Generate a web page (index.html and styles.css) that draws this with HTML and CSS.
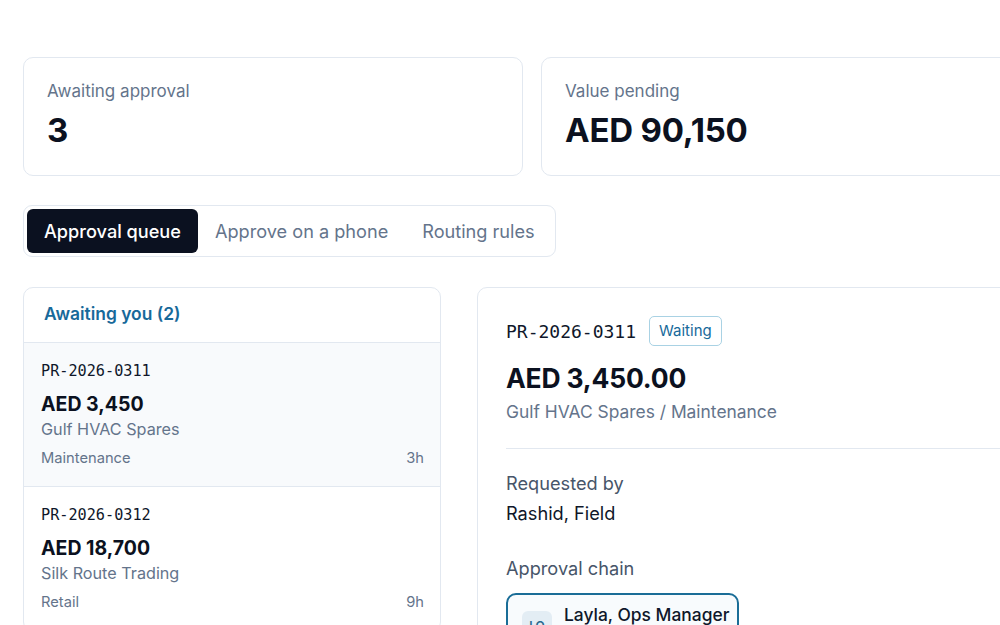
FILE: index.html
```html
<!DOCTYPE html>
<html lang="en">
<head>
<meta charset="utf-8">
<title>Approvals</title>
<link rel="stylesheet" href="styles.css">
</head>
<body>
<main class="page">
  <section class="stats">
    <div class="stat">
      <div class="stat-label">Awaiting approval</div>
      <div class="stat-value">3</div>
    </div>
    <div class="stat">
      <div class="stat-label">Value pending</div>
      <div class="stat-value">AED 90,150</div>
    </div>
  </section>

  <nav class="tabs">
    <div class="tab active">Approval queue</div>
    <div class="tab">Approve on a phone</div>
    <div class="tab">Routing rules</div>
  </nav>

  <section class="panes">
    <div class="queue">
      <div class="queue-head">Awaiting you (2)</div>
      <div class="item selected">
        <div class="item-id">PR-2026-0311</div>
        <div class="item-amount">AED 3,450</div>
        <div class="item-vendor">Gulf HVAC Spares</div>
        <div class="item-meta"><span>Maintenance</span><span>3h</span></div>
      </div>
      <div class="item">
        <div class="item-id">PR-2026-0312</div>
        <div class="item-amount">AED 18,700</div>
        <div class="item-vendor">Silk Route Trading</div>
        <div class="item-meta"><span>Retail</span><span>9h</span></div>
      </div>
    </div>

    <div class="detail">
      <div class="detail-top">
        <span class="detail-id">PR-2026-0311</span>
        <span class="badge">Waiting</span>
      </div>
      <div class="detail-amount">AED 3,450.00</div>
      <div class="detail-sub">Gulf HVAC Spares / Maintenance</div>
      <div class="divider"></div>
      <div class="field-label">Requested by</div>
      <div class="field-value">Rashid, Field</div>
      <div class="field-label chain-label">Approval chain</div>
      <div class="chain">
        <div class="chain-step">
          <span class="avatar">LO</span>
          <span class="step-name">Layla, Ops Manager</span>
        </div>
      </div>
    </div>
  </section>
</main>
</body>
</html>
```

FILE: styles.css
```css
* { box-sizing: border-box; }
html, body {
  margin: 0;
  padding: 0;
  background: #ffffff;
  overflow: hidden;
  width: 1000px;
  height: 625px;
}
body {
  font-family: Inter, "Noto Sans", sans-serif;
  color: #0f172a;
}
.page {
  padding: 57px 0 0 23px;
  width: 1500px;
}
.stats {
  display: flex;
  gap: 18px;
}
.stat {
  width: 500px;
  height: 119px;
  border: 1px solid #e2e8f0;
  border-radius: 10px;
  padding: 22px 23px 0;
}
.stat-label {
  font-size: 17px;
  line-height: 22px;
  color: #64748b;
}
.stat-value {
  margin-top: 10px;
  font-size: 33px;
  line-height: 36px;
  font-weight: 700;
  letter-spacing: -0.2px;
  color: #0b1120;
}
.tabs {
  display: inline-flex;
  margin-top: 29px;
  border: 1px solid #e2e8f0;
  border-radius: 9px;
  padding: 3px;
}
.tab {
  height: 44px;
  line-height: 44px;
  padding: 0 17px;
  font-size: 18.15px;
  color: #64748b;
  border-radius: 6px;
}
.tab.active {
  background: #0b1120;
  color: #ffffff;
  font-weight: 500;
}
.panes {
  display: flex;
  gap: 36px;
  margin-top: 30px;
  align-items: flex-start;
}
.queue {
  width: 418px;
  border: 1px solid #e2e8f0;
  border-radius: 10px;
  overflow: hidden;
  flex: none;
}
.queue-head {
  height: 55px;
  padding: 14px 20px 0;
  font-size: 17.4px;
  line-height: 24px;
  font-weight: 600;
  color: #17699a;
  border-bottom: 1px solid #e2e8f0;
}
.item {
  padding: 18px 16px 18px 17px;
  border-bottom: 1px solid #e2e8f0;
}
.item.selected { background: #f8fafc; }
.item-id {
  font-family: "DejaVu Sans Mono", "Liberation Mono", monospace;
  font-size: 15.2px;
  line-height: 20px;
  color: #0f172a;
}
.item-amount {
  margin-top: 10px;
  font-size: 19.5px;
  line-height: 26px;
  font-weight: 700;
  color: #0b1120;
}
.item-vendor {
  font-size: 16.2px;
  line-height: 24px;
  color: #64748b;
}
.item-meta {
  margin-top: 7px;
  display: flex;
  justify-content: space-between;
  font-size: 14.7px;
  line-height: 20px;
  color: #64748b;
}
.detail {
  width: 640px;
  flex: none;
  border: 1px solid #e2e8f0;
  border-radius: 10px;
  padding: 28px 28px 40px;
}
.detail-top {
  display: flex;
  align-items: center;
  gap: 13px;
  height: 30px;
}
.detail-id {
  font-family: "DejaVu Sans Mono", "Liberation Mono", monospace;
  font-size: 18px;
  color: #0f172a;
}
.badge {
  height: 30px;
  line-height: 28px;
  padding: 0 9px;
  border: 1px solid #a9d2e4;
  border-radius: 5px;
  font-size: 15px;
  color: #17699a;
}
.detail-amount {
  margin-top: 15px;
  font-size: 26.5px;
  line-height: 34px;
  font-weight: 700;
  letter-spacing: -0.2px;
  color: #0b1120;
}
.detail-sub {
  margin-top: 5px;
  font-size: 17.4px;
  line-height: 24px;
  color: #64748b;
}
.divider {
  margin-top: 24px;
  height: 1px;
  background: #e2e8f0;
  width: 700px;
}
.field-label {
  margin-top: 22px;
  font-size: 18.2px;
  line-height: 24px;
  color: #475569;
}
.field-value {
  margin-top: 6px;
  font-size: 18.2px;
  line-height: 24px;
  color: #0f172a;
}
.chain-label { margin-top: 31px; }
.chain {
  margin-top: 13px;
  display: flex;
}
.chain-step {
  display: flex;
  align-items: flex-start;
  gap: 12px;
  border: 2px solid #1a6d97;
  border-radius: 10px;
  background: #f8fbfd;
  padding: 9px 14px 14px 14px;
  width: 233px;
}
.avatar {
  margin-top: 7px;
  width: 30px;
  height: 30px;
  border-radius: 6px;
  background: #e3edf4;
  color: #2a6a8f;
  font-size: 12px;
  font-weight: 600;
  line-height: 30px;
  text-align: center;
  flex: none;
}
.step-name {
  font-size: 17.4px;
  line-height: 22px;
  font-weight: 500;
  white-space: nowrap;
  color: #0f172a;
}
```
